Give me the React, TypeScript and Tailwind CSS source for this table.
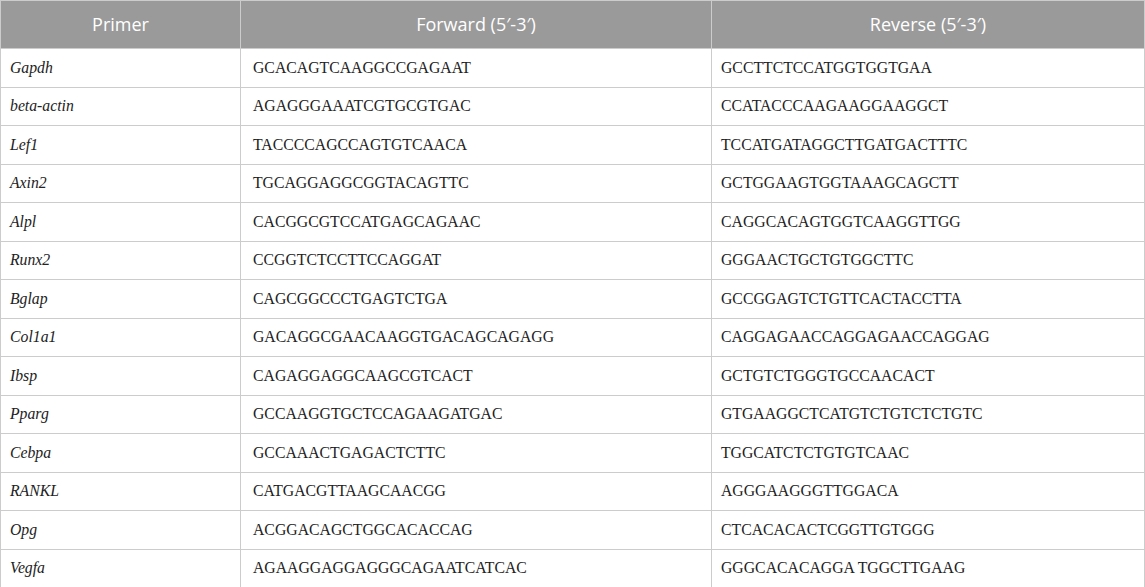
const rows: [string, string, string][] = [
  ["Gapdh", "GCACAGTCAAGGCCGAGAAT", "GCCTTCTCCATGGTGGTGAA"],
  ["beta-actin", "AGAGGGAAATCGTGCGTGAC", "CCATACCCAAGAAGGAAGGCT"],
  ["Lef1", "TACCCCAGCCAGTGTCAACA", "TCCATGATAGGCTTGATGACTTTC"],
  ["Axin2", "TGCAGGAGGCGGTACAGTTC", "GCTGGAAGTGGTAAAGCAGCTT"],
  ["Alpl", "CACGGCGTCCATGAGCAGAAC", "CAGGCACAGTGGTCAAGGTTGG"],
  ["Runx2", "CCGGTCTCCTTCCAGGAT", "GGGAACTGCTGTGGCTTC"],
  ["Bglap", "CAGCGGCCCTGAGTCTGA", "GCCGGAGTCTGTTCACTACCTTA"],
  ["Col1a1", "GACAGGCGAACAAGGTGACAGCAGAGG", "CAGGAGAACCAGGAGAACCAGGAG"],
  ["Ibsp", "CAGAGGAGGCAAGCGTCACT", "GCTGTCTGGGTGCCAACACT"],
  ["Pparg", "GCCAAGGTGCTCCAGAAGATGAC", "GTGAAGGCTCATGTCTGTCTCTGTC"],
  ["Cebpa", "GCCAAACTGAGACTCTTC", "TGGCATCTCTGTGTCAAC"],
  ["RANKL", "CATGACGTTAAGCAACGG", "AGGGAAGGGTTGGACA"],
  ["Opg", "ACGGACAGCTGGCACACCAG", "CTCACACACTCGGTTGTGGG"],
  ["Vegfa", "AGAAGGAGGAGGGCAGAATCATCAC", "GGGCACACAGGA TGGCTTGAAG"],
];

export default function App() {
  return (
    <div className="w-[1145px] h-[587px] bg-white">
      <table className="w-full border-collapse table-fixed">
        <colgroup>
          <col className="w-[240px]" />
          <col className="w-[471px]" />
          <col />
        </colgroup>
        <thead>
          <tr className="h-[48px] bg-[#9a9a9a] text-white text-[18px] font-['Open_Sans',sans-serif]">
            <th className="font-normal text-center border border-[#cccccc]">Primer</th>
            <th className="font-normal text-center border border-[#cccccc]">Forward (5′-3′)</th>
            <th className="font-normal text-center border border-[#cccccc]">Reverse (5′-3′)</th>
          </tr>
        </thead>
        <tbody className="text-[15.75px] text-[#222222] font-['Liberation_Serif',serif]">
          {rows.map(([gene, fwd, rev]) => (
            <tr key={gene} className="h-[38.5px]">
              <td className="border border-[#cccccc] pl-[9px] italic">{gene}</td>
              <td className="border border-[#cccccc] pl-[12px]">{fwd}</td>
              <td className="border border-[#cccccc] pl-[9px]">{rev}</td>
            </tr>
          ))}
        </tbody>
      </table>
    </div>
  );
}
